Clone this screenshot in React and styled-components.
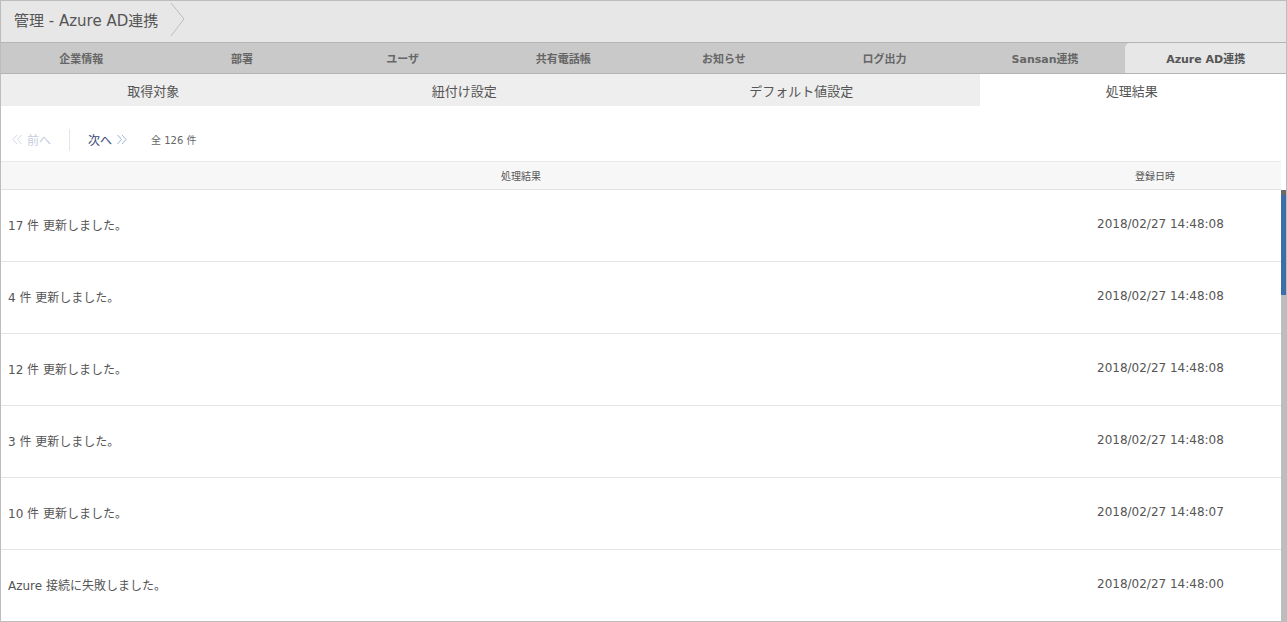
import React from 'react';
import styled, { createGlobalStyle } from 'styled-components';

const Global = createGlobalStyle`
  html, body {
    margin: 0;
    padding: 0;
    background: #fff;
  }
  body {
    font-family: "DejaVu Sans", "Noto Sans CJK JP", sans-serif;
    color: #555;
  }
`;

const Frame = styled.div`
  box-sizing: border-box;
  width: 1287px;
  height: 622px;
  border: 1px solid #bdbdbd;
  display: flex;
  flex-direction: column;
  overflow: hidden;
`;

const Header = styled.div`
  height: 41px;
  flex: none;
  background: #e7e7e7;
  border-bottom: 1px solid #b4b4b4;
  display: flex;
  align-items: center;
  padding-left: 13px;
`;

const Title = styled.span`
  font-size: 15px;
  color: #555;
  margin-top: -4px;
`;

const Chevron = styled.svg`
  width: 16px;
  height: 36px;
  margin-left: 12px;
  margin-top: -4px;
`;

const MainTabs = styled.div`
  height: 30px;
  flex: none;
  display: flex;
  background: #c9c9c9;
  border-bottom: 1px solid #b4b4b4;
`;

const MainTab = styled.div`
  flex: 1 1 0;
  display: flex;
  align-items: center;
  justify-content: center;
  font-size: 11px;
  font-weight: bold;
  color: ${p => (p.$active ? '#555' : '#666')};
  background: ${p => (p.$active ? '#e7e7e7' : '#c9c9c9')};
  border-top-left-radius: ${p => (p.$active ? '5px' : '0')};
  border-top-right-radius: ${p => (p.$beforeActive ? '5px' : '0')};
`;

const SubTabs = styled.div`
  height: 32px;
  flex: none;
  display: flex;
  background: #eeeeee;
  margin-right: 2px;
`;

const SubTab = styled.div`
  flex: 1 1 auto;
  display: flex;
  align-items: center;
  justify-content: center;
  font-size: 13px;
  color: #555;
  background: ${p => (p.$active ? '#fff' : '#eeeeee')};
`;

const Pager = styled.div`
  height: 55px;
  box-sizing: border-box;
  padding: 12px 0 0 11px;
  flex: none;
  display: flex;
  align-items: center;
`;

const PageLink = styled.span`
  display: flex;
  align-items: center;
  gap: 4px;
  font-size: 12px;
  color: ${p => (p.$disabled ? '#c6cde0' : '#3b4a78')};
`;

const Divider = styled.span`
  width: 1px;
  height: 22px;
  background: #e4e4e4;
  margin: 0 18px 0 18px;
`;

const Count = styled.span`
  font-size: 10px;
  color: #666;
  margin-left: 24px;
`;

const Arrows = ({ dir, color }) => (
  <svg width="11" height="11" viewBox="0 0 11 11">
    {dir === 'left' ? (
      <g fill="none" stroke={color} strokeWidth="1">
        <polyline points="5,1 1,5.5 5,10" />
        <polyline points="9.5,1 5.5,5.5 9.5,10" />
      </g>
    ) : (
      <g fill="none" stroke={color} strokeWidth="1">
        <polyline points="1.5,1 5.5,5.5 1.5,10" />
        <polyline points="6,1 10,5.5 6,10" />
      </g>
    )}
  </svg>
);

const TableHead = styled.div`
  height: 27px;
  flex: none;
  display: flex;
  background: #f7f7f7;
  border-top: 1px solid #e8e8e8;
  border-bottom: 1px solid #e2e2e2;
  margin-right: 5px;
`;

const HeadCell = styled.div`
  width: ${p => p.$w || 'auto'};
  flex: ${p => (p.$w ? 'none' : '1')};
  display: flex;
  align-items: center;
  justify-content: center;
  padding-right: ${p => p.$padR || '0'};
  font-size: 10px;
  color: #555;
`;

const Body = styled.div`
  flex: 1;
  display: flex;
  min-height: 0;
`;

const Rows = styled.div`
  flex: 1;
  display: flex;
  flex-direction: column;
`;

const Row = styled.div`
  height: 71px;
  flex: none;
  display: flex;
  border-bottom: 1px solid #e4e4e4;
`;

const Cell = styled.div`
  width: ${p => p.$w || 'auto'};
  flex: ${p => (p.$w ? 'none' : '1')};
  display: flex;
  align-items: center;
  padding-left: ${p => p.$pad || '7px'};
  padding-bottom: 3px;
  box-sizing: border-box;
  font-size: 12px;
  color: #555;
`;

const Track = styled.div`
  width: 5px;
  flex: none;
  background: #bdbdbd;
  display: flex;
  flex-direction: column;
`;

const Thumb = styled.div`
  height: 100px;
  background: #3c6ea9;
  border-top: 5px solid #6a6a6a;
`;

const mainTabs = ['企業情報', '部署', 'ユーザ', '共有電話帳', 'お知らせ', 'ログ出力', 'Sansan連携', 'Azure AD連携'];
const subTabs = ['取得対象', '紐付け設定', 'デフォルト値設定', '処理結果'];

const results = [
  ['17 件 更新しました。', '2018/02/27 14:48:08'],
  ['4 件 更新しました。', '2018/02/27 14:48:08'],
  ['12 件 更新しました。', '2018/02/27 14:48:08'],
  ['3 件 更新しました。', '2018/02/27 14:48:08'],
  ['10 件 更新しました。', '2018/02/27 14:48:07'],
  ['Azure 接続に失敗しました。', '2018/02/27 14:48:00'],
];

export default function App() {
  return (
    <>
      <Global />
      <Frame>
        <Header>
          <Title>管理 - Azure AD連携</Title>
          <Chevron viewBox="0 0 16 36">
            <polyline points="1,1 14,17 1,34" fill="none" stroke="#bdbdbd" strokeWidth="1" />
          </Chevron>
        </Header>
        <MainTabs>
          {mainTabs.map((t, i) => (
            <MainTab key={t} $active={i === 7} $beforeActive={i === 6}>
              {t}
            </MainTab>
          ))}
        </MainTabs>
        <SubTabs>
          {subTabs.map((t, i) => (
            <SubTab key={t} $active={i === 3}>
              {t}
            </SubTab>
          ))}
        </SubTabs>
        <Pager>
          <PageLink $disabled>
            <Arrows dir="left" color="#d3d9e8" />
            前へ
          </PageLink>
          <Divider />
          <PageLink>
            次へ
            <Arrows dir="right" color="#a3b3da" />
          </PageLink>
          <Count>全 126 件</Count>
        </Pager>
        <TableHead>
          <HeadCell>処理結果</HeadCell>
          <HeadCell $w="228px" $padR="12px">登録日時</HeadCell>
        </TableHead>
        <Body>
          <Rows>
            {results.map(([msg, date], i) => (
              <Row key={i}>
                <Cell>{msg}</Cell>
                <Cell $w="240px" $pad="56px">{date}</Cell>
              </Row>
            ))}
          </Rows>
          <Track>
            <Thumb />
          </Track>
        </Body>
      </Frame>
    </>
  );
}
